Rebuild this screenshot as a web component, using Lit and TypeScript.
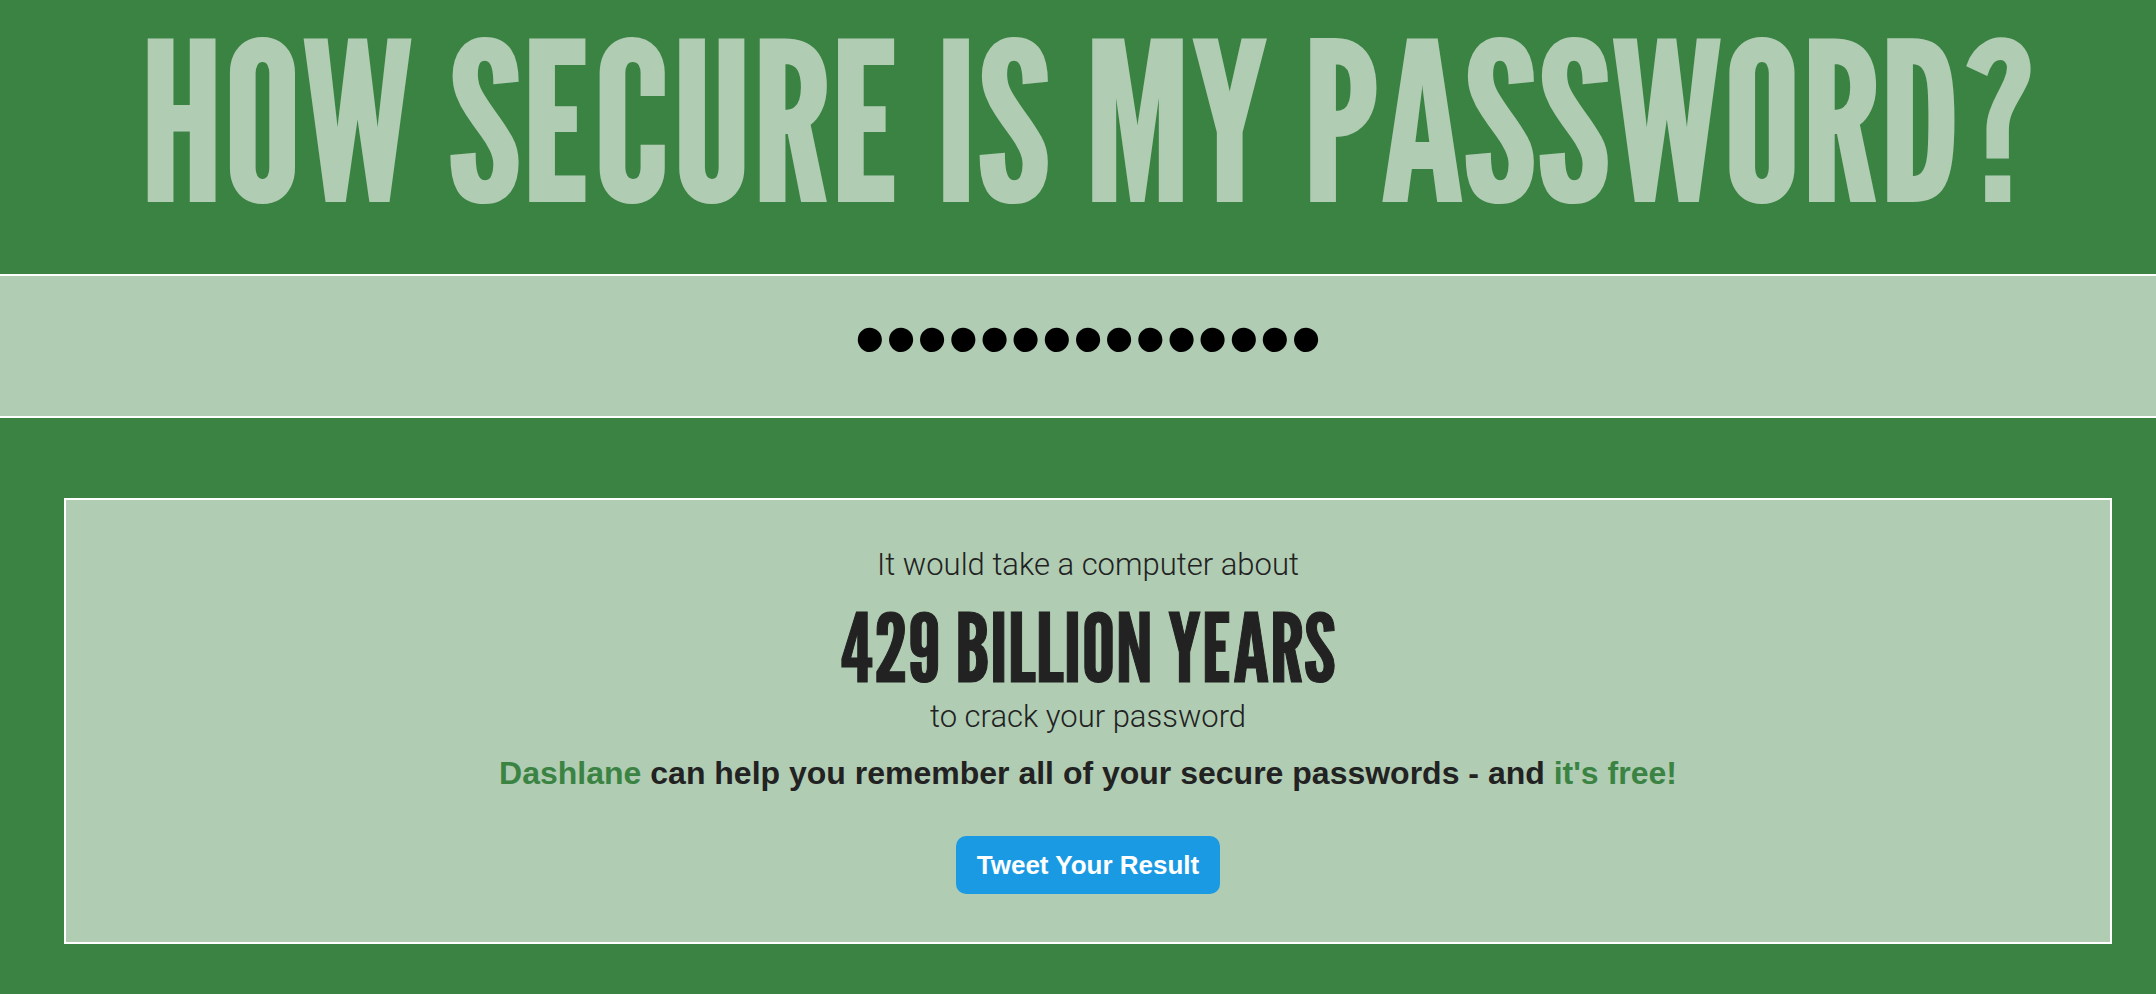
import { LitElement, html, css } from "lit";
import { customElement, state } from "lit/decorators.js";

@customElement("app-root")
export class AppRoot extends LitElement {
  @state() private password = "correcthorsebat";

  static styles = css`
    :host {
      display: block;
      min-height: 100vh;
      background: #3b8343;
      color: #222;
      font-family: "Helvetica Neue", "Liberation Sans", sans-serif;
      font-size: 32px;
      line-height: 40px;
      text-align: center;
    }
    * {
      box-sizing: border-box;
    }
    .title {
      margin: 0;
      padding: 0 0 32px 20px;
      font-family: "League Gothic", "Liberation Sans Narrow", sans-serif;
      font-size: 219px;
      font-weight: 400;
      line-height: 242px;
      white-space: nowrap;
      color: #b0ccb3;
      -webkit-text-stroke: 2px #b0ccb3;
    }
    .password {
      display: block;
      width: 100%;
      height: 144px;
      margin: 0;
      padding: 0 0 16px 20px;
      border: solid #fff;
      border-width: 2px 0;
      border-radius: 0;
      outline: none;
      background: #b0ccb3;
      color: #000;
      font-family: "Liberation Sans", sans-serif;
      font-size: 89px;
      text-align: center;
    }
    .result {
      margin: 80px 44px 48px 64px;
      padding: 45px 32px 48px;
      border: 2px solid #fff;
      background: #b0ccb3;
    }
    .light {
      margin: 0;
      font-family: "Roboto", sans-serif;
      font-weight: 300;
      font-size: 31px;
    }
    .time {
      margin: 0;
      padding: 22px 0 10px;
      font-family: "League Gothic", "Liberation Sans Narrow", sans-serif;
      font-size: 95px;
      font-weight: 400;
      line-height: 80px;
      -webkit-text-stroke: 1px #222;
    }
    .offer {
      margin: 16px 0 43px;
      font-weight: 700;
    }
    .link {
      color: #3b8343;
      text-decoration: none;
    }
    .tweet {
      display: inline-block;
      padding: 8px 21px;
      border: 0;
      border-radius: 10px;
      background: #1b9ae4;
      color: #fff;
      font-family: inherit;
      font-size: 26px;
      font-weight: 700;
      line-height: 42px;
      vertical-align: top;
      cursor: pointer;
    }
  `;

  private onInput(e: Event) {
    this.password = (e.target as HTMLInputElement).value;
  }

  render() {
    return html`
      <main>
        <h1 class="title">HOW SECURE IS MY PASSWORD?</h1>
        <input
          class="password"
          type="password"
          aria-label="Password"
          .value=${this.password}
          @input=${this.onInput}
        />
        <section class="result">
          <p class="light">It would take a computer about</p>
          <p class="time">429 BILLION YEARS</p>
          <p class="light">to crack your password</p>
          <p class="offer">
            <a class="link" href="#dashlane">Dashlane</a> can help you remember
            all of your secure passwords - and
            <a class="link" href="#free">it's free!</a>
          </p>
          <button class="tweet" type="button">Tweet Your Result</button>
        </section>
      </main>
    `;
  }
}
